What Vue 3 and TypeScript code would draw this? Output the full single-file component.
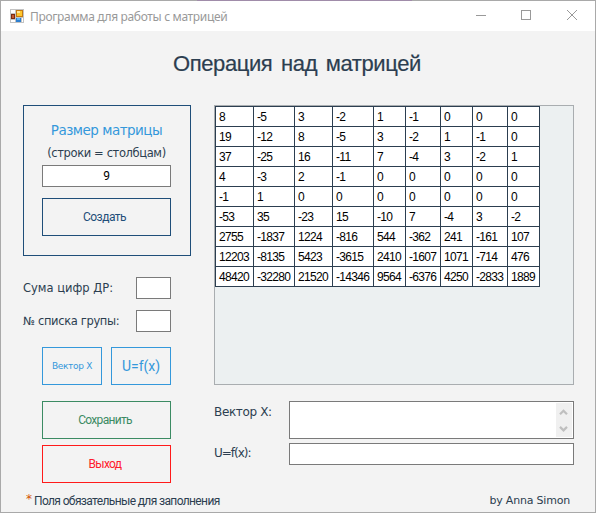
<script setup lang="ts">
import { ref } from 'vue'

const size = ref('9')
const birthSum = ref('')
const listNumber = ref('')
const vectorX = ref('')
const result = ref('')

const matrix: number[][] = [
  [8, -5, 3, -2, 1, -1, 0, 0, 0],
  [19, -12, 8, -5, 3, -2, 1, -1, 0],
  [37, -25, 16, -11, 7, -4, 3, -2, 1],
  [4, -3, 2, -1, 0, 0, 0, 0, 0],
  [-1, 1, 0, 0, 0, 0, 0, 0, 0],
  [-53, 35, -23, 15, -10, 7, -4, 3, -2],
  [2755, -1837, 1224, -816, 544, -362, 241, -161, 107],
  [12203, -8135, 5423, -3615, 2410, -1607, 1071, -714, 476],
  [48420, -32280, 21520, -14346, 9564, -6376, 4250, -2833, 1889],
]
</script>

<template>
  <div class="frame">
    <div class="window">
      <header class="titlebar">
        <svg class="app-icon" width="14" height="14" viewBox="0 0 14 14" shape-rendering="crispEdges">
          <rect width="14" height="14" fill="#c3c3c3" />
          <rect x="1" y="1" width="4" height="3" fill="#fff" />
          <rect x="1" y="11" width="4" height="2" fill="#fff" />
          <rect x="12" y="9" width="1" height="4" fill="#fff" />
          <rect x="1" y="5" width="4" height="5" fill="#7c2b12" />
          <rect x="2" y="6" width="2" height="3" fill="#c65a31" />
          <rect x="6" y="1" width="7" height="7" fill="#c47a12" />
          <rect x="7" y="2" width="5" height="5" fill="#ffc72e" />
          <rect x="7" y="2" width="3" height="2" fill="#ffe596" />
          <rect x="6" y="9" width="5" height="4" fill="#2d7fd0" />
          <rect x="7" y="9" width="3" height="2" fill="#62b5f5" />
        </svg>
        <span class="caption">Программа для работы с матрицей</span>
        <svg class="controls" width="104" height="12" viewBox="0 0 104 12" fill="none" stroke="#999" stroke-width="1">
          <path d="M0 6.5H10" shape-rendering="crispEdges" />
          <rect x="45.5" y="1.5" width="9" height="9" shape-rendering="crispEdges" />
          <path d="M91 1L101 11M101 1L91 11" />
        </svg>
      </header>

      <h1>Операция над матрицей</h1>

      <main>
        <section class="left">
          <div class="panel">
            <div class="size-title"><span>Размер матрицы</span></div>
            <div class="size-hint"><span>(строки = столбцам)</span></div>
            <input v-model="size" class="size-input" />
            <button class="create"><span>Создать</span></button>
          </div>
          <label class="row first"><span class="l-sum">Сума цифр ДР:</span><input v-model="birthSum" /></label>
          <label class="row"><span class="l-num">№ списка групы:</span><input v-model="listNumber" /></label>
          <div class="pair">
            <button class="blue small"><span>Вектор X</span></button>
            <button class="blue"><span>U=f(x)</span></button>
          </div>
          <button class="wide save"><span>Сохранить</span></button>
          <button class="wide exit"><span>Выход</span></button>
        </section>

        <section class="right">
          <div class="grid">
            <table>
              <colgroup>
                <col class="w38" /><col class="w41" /><col class="w38" /><col class="w41" /><col class="w32" />
                <col class="w35" /><col class="w32" /><col class="w35" /><col class="w32" />
              </colgroup>
              <tbody>
                <tr v-for="(line, r) in matrix" :key="r">
                  <td v-for="(value, c) in line" :key="c">{{ value }}</td>
                </tr>
              </tbody>
            </table>
          </div>
          <div class="output">
            <span class="l-vec">Вектор X:</span>
            <div class="area">
              <div class="text">{{ vectorX }}</div>
              <svg width="16" height="34" viewBox="0 0 16 34" fill="none" stroke="#bfbfbf" stroke-width="2.2">
                <rect width="16" height="34" fill="#f0f0f0" stroke="none" />
                <path d="M4 11.3L7.5 7.8L11 11.3M4 23.9L7.5 27.4L11 23.9" />
              </svg>
            </div>
          </div>
          <div class="output second">
            <span class="l-fn">U=f(x):</span>
            <input v-model="result" />
          </div>
        </section>
      </main>

      <footer>
        <span class="star">*</span>
        <span class="note">Поля обязательные для заполнения</span>
        <span class="author">by Anna Simon</span>
      </footer>
    </div>
  </div>
</template>

<style>
body {
  margin: 0;
  overflow: hidden;
}
</style>

<style scoped>
.frame {
  box-sizing: border-box;
  width: 596px;
  height: 513px;
  padding: 1px;
  background: linear-gradient(90deg, #a9a9a9 197px, #a08ca9 197px 412px, #a9a9a9 412px) top / 100% 1px no-repeat #a9a9a9;
  font-family: "DejaVu Sans", sans-serif;
  font-size: 12px;
  color: #2c3e50;
  white-space: nowrap;
}
.window {
  height: 511px;
  background: #f3f3f3;
  display: flex;
  flex-direction: column;
}
.titlebar {
  flex: none;
  height: 30px;
  background: #fff;
  display: flex;
  align-items: center;
  padding: 0 15px 0 9px;
}
.app-icon { margin-right: 6px; }
.caption {
  font: 12px "Noto Sans", sans-serif;
  color: #999;
  letter-spacing: -0.34px;
}
.controls {
  margin-left: auto;
  margin-top: -2px;
}
h1 {
  flex: none;
  margin: 0;
  height: 74px;
  padding-left: 172px;
  font: 400 22px/66px "Liberation Sans", sans-serif;
  letter-spacing: -0.4px;
  word-spacing: 3px;
  -webkit-text-stroke: 0.2px #2c3e50;
}
main {
  flex: none;
  display: flex;
  gap: 23px;
  padding-left: 22px;
  height: 379px;
}
.left { width: 168px; }
.right { width: 360px; }
.panel {
  box-sizing: border-box;
  height: 151px;
  border: 1px solid #1f4e79;
  padding: 14px 19px 0 18px;
  display: flex;
  flex-direction: column;
  align-items: center;
}
input, .area {
  box-sizing: border-box;
  height: 22px;
  border: 1px solid #7a7a7a;
  background: #fff;
  padding: 0;
  margin: 0;
  outline: none;
  border-radius: 0;
}
.size-title {
  line-height: 21px;
  font-size: 13.5px;
  letter-spacing: -0.5px;
  color: #3498db;
}
.size-hint {
  line-height: 24px;
  font-size: 11.5px;
  letter-spacing: -0.38px;
}
.size-input {
  width: 129px;
  flex: none;
  text-align: center;
  font: 12px "Roboto", sans-serif;
  padding-bottom: 1px;
}
button {
  box-sizing: border-box;
  height: 38px;
  padding: 0;
  border: 1px solid;
  background: none;
  font: 12px "Roboto", sans-serif;
  white-space: nowrap;
}
.create {
  width: 129px;
  margin-top: 11px;
  padding-right: 4px;
  border-color: #1f4e79;
  color: #1f4e79;
  letter-spacing: -0.5px;
}
.row {
  display: flex;
  justify-content: space-between;
  width: 148px;
  margin-top: 11px;
  line-height: 22px;
}
.row.first { margin-top: 21px; }
.row input { width: 35px; }
.l-sum, .l-num {
  font-size: 11.5px;
}
.l-num { letter-spacing: -0.35px; }
.pair {
  display: flex;
  gap: 9px;
  margin: 15px 0 0 19px;
}
.blue {
  width: 60px;
  border-color: #3498db;
  color: #3498db;
  font-size: 14px;
}
.blue.small {
  font: 9px "DejaVu Sans", sans-serif;
  letter-spacing: -0.3px;
}
.wide {
  display: block;
  width: 129px;
  margin: 6px 0 0 19px;
  padding-right: 3px;
}
.save {
  margin-top: 16px;
  border-color: #3b8b63;
  color: #3b8b63;
  letter-spacing: -0.7px;
}
.exit {
  border-color: #ff1a1a;
  color: #ff1a2d;
  letter-spacing: -0.7px;
}
.grid {
  box-sizing: border-box;
  height: 280px;
  border: 1px solid #a9adb0;
  background: #ecf0f1;
}
table {
  width: 325px;
  table-layout: fixed;
  border-collapse: separate;
  border-spacing: 0;
  border-top: 1px solid #2c3e50;
  border-left: 1px solid #2c3e50;
  background: #fff;
}
td {
  box-sizing: border-box;
  height: 20px;
  padding: 1px 0 0 3px;
  border-right: 1px solid #2c3e50;
  border-bottom: 1px solid #2c3e50;
  font: 12px/18px "Liberation Sans", sans-serif;
  letter-spacing: -0.67px;
  color: #000;
}
.w32 { width: 32px; }
.w35 { width: 35px; }
.w38 { width: 38px; }
.w41 { width: 41px; }
.output {
  display: flex;
  justify-content: space-between;
  margin-top: 16px;
  line-height: 22px;
}
.second {
  margin-top: 4px;
  line-height: 20px;
}
.l-vec { letter-spacing: -0.35px; }
.l-fn { letter-spacing: -1px; }
.output input { width: 285px; }
.area {
  width: 285px;
  height: 38px;
  padding: 1px;
  display: flex;
  justify-content: space-between;
}
footer {
  display: flex;
  padding: 0 25px 0 25px;
  line-height: 30px;
}
.star {
  width: 8px;
  color: #d35400;
}
.note {
  font: 12px/35px "Roboto", sans-serif;
  letter-spacing: -0.63px;
}
.author {
  margin-left: auto;
  font-size: 11px;
  letter-spacing: -0.2px;
  line-height: 33px;
}
</style>
